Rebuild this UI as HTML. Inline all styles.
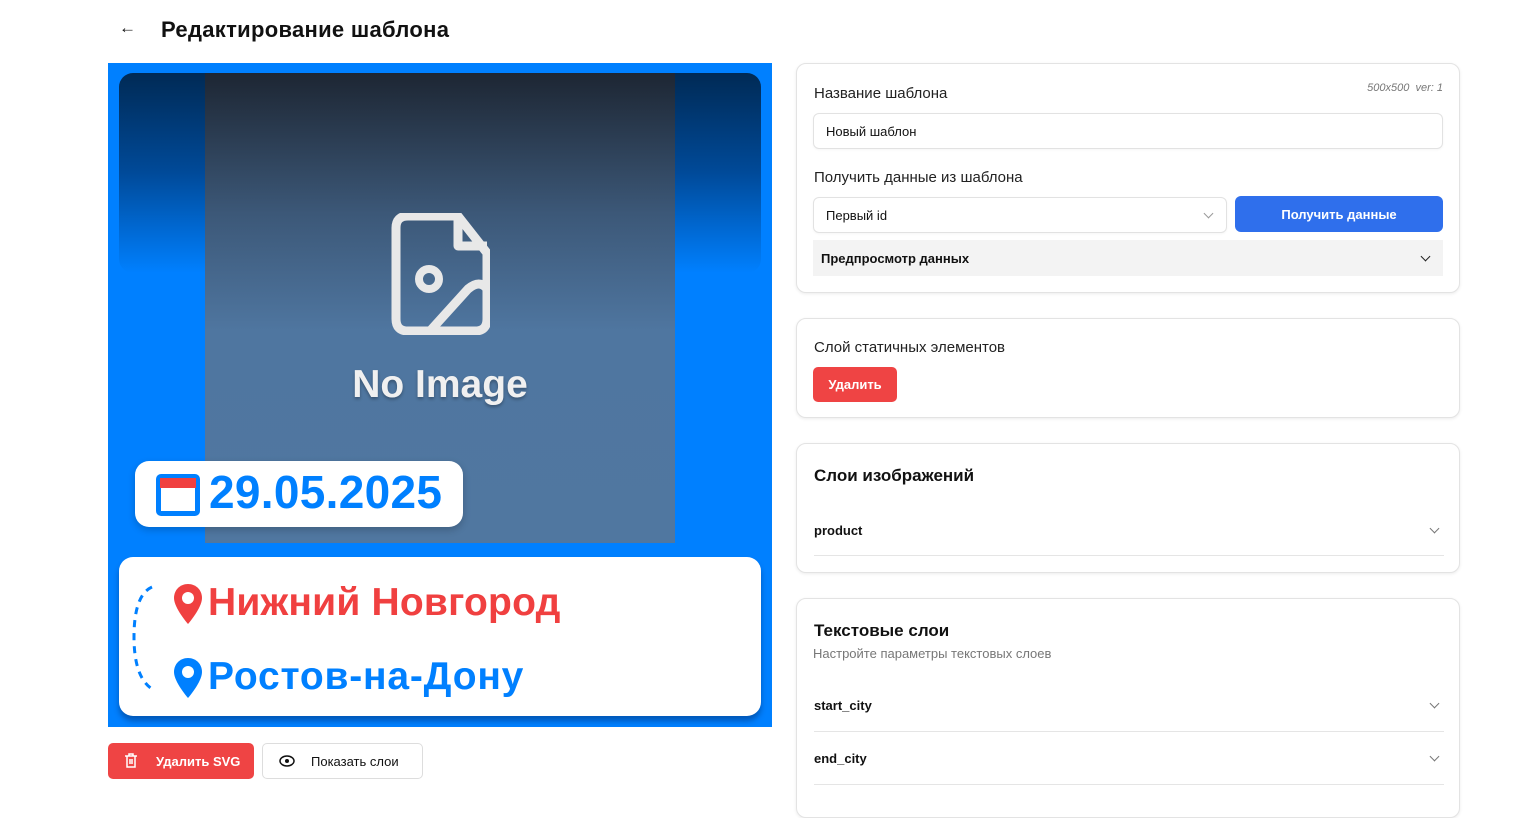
<!DOCTYPE html>
<html><head><meta charset="utf-8"><style>
*{box-sizing:border-box;margin:0;padding:0}
body{width:1522px;height:798px;overflow:hidden;background:#fff;font-family:"Liberation Sans","Noto Sans CJK SC",sans-serif;color:#111;position:relative}
.abs{position:absolute}
.card{position:absolute;left:796px;width:664px;border:1px solid #e3e3e3;border-radius:10px;box-shadow:0 1px 3px rgba(0,0,0,.08);background:#fff}
.lbl{position:absolute;left:17px;font-size:15px;color:#222}
.inp{position:absolute;border:1px solid #e2e2e2;border-radius:6px;font-size:13px;padding-left:12px;display:flex;align-items:center;box-shadow:0 1px 2px rgba(0,0,0,.04)}
.row{position:absolute;left:17px;width:630px;border-bottom:1px solid #e5e5e5;font-size:13px;font-weight:bold;display:flex;align-items:center;justify-content:space-between}
.chev{width:7px;height:7px;border-right:1.5px solid #555;border-bottom:1.5px solid #555;transform:rotate(45deg);margin-right:6px;margin-top:-4px}
</style></head><body>
<div class="abs" style="left:119px;top:18px;font-size:17px">&#8592;</div>
<div class="abs" style="left:161px;top:17px;font-size:22px;font-weight:bold;letter-spacing:0.3px">Редактирование шаблона</div>

<div class="abs" style="left:108px;top:63px;width:664px;height:664px;background:#0080ff;overflow:hidden">
 <div class="abs" style="left:11px;top:10px;width:642px;height:200px;border-radius:14px;background:linear-gradient(#002a55,#004a99 50%,#0080ff)"></div>
 <div class="abs" style="left:97px;top:10px;width:470px;height:470px;background:linear-gradient(#1d2633,#3c5878 30%,#4f76a0 55%,#5077a0)"></div>
 <svg class="abs" style="left:282px;top:150px" width="100" height="122" viewBox="0 0 100 122"><path d="M18 3H68L97 40V106Q97 118 85 118H18Q6 118 6 106V15Q6 3 18 3Z M68 3V33H97 M40 118L78 76Q90 66 97 76" fill="none" stroke="#e8e8e8" stroke-width="9" stroke-linejoin="round"/><circle cx="39" cy="66" r="10" fill="none" stroke="#e8e8e8" stroke-width="8"/></svg>
 <div class="abs" style="left:97px;width:470px;top:300px;text-align:center;color:#f0f0f0;font-size:39px;font-weight:bold;text-shadow:0 2px 3px rgba(0,0,0,.3)">No Image</div>
 <div class="abs" style="left:27px;top:398px;width:328px;height:66px;background:#fff;border-radius:14px;box-shadow:0 3px 8px rgba(0,0,0,.2)"></div>
 <div class="abs" style="left:48px;top:411px;width:44px;height:42px;border:5px solid #0080ff;border-radius:5px;background:#fff"><div style="height:10px;background:#f04040;margin:-1px"></div></div>
 <div class="abs" style="left:101px;top:402px;font-size:46px;font-weight:bold;color:#0080ff;letter-spacing:0.3px">29.05.2025</div>
 <div class="abs" style="left:11px;top:494px;width:642px;height:159px;background:#fff;border-radius:14px;box-shadow:0 5px 6px rgba(0,40,100,.45)"></div>
 <svg class="abs" style="left:20px;top:518px" width="40" height="112"><path d="M24 6Q6 14 6 56Q6 96 24 108" fill="none" stroke="#0080ff" stroke-width="3" stroke-dasharray="7 6"/></svg>
 <svg class="abs" style="left:65px;top:520px" width="30" height="42" viewBox="0 0 30 42"><path d="M15 1C7 1 1 7 1 15C1 25 15 41 15 41S29 25 29 15C29 7 23 1 15 1Z" fill="#f04040"/><circle cx="15" cy="15" r="6" fill="#fff"/></svg>
 <svg class="abs" style="left:65px;top:594px" width="30" height="42" viewBox="0 0 30 42"><path d="M15 1C7 1 1 7 1 15C1 25 15 41 15 41S29 25 29 15C29 7 23 1 15 1Z" fill="#0080ff"/><circle cx="15" cy="15" r="6" fill="#fff"/></svg>
 <div class="abs" style="left:100px;top:518px;font-size:39px;font-weight:bold;color:#f04040;letter-spacing:0.2px">Нижний Новгород</div>
 <div class="abs" style="left:100px;top:592px;font-size:39px;font-weight:bold;color:#0080ff;letter-spacing:0.8px">Ростов-на-Дону</div>
</div>

<div class="abs" style="left:108px;top:743px;width:146px;height:36px;background:#ef4444;border-radius:5px;color:#fff;font-size:13px;font-weight:bold;display:flex;align-items:center;padding-left:48px">Удалить SVG</div>
<svg class="abs" style="left:124px;top:753px" width="14" height="16"><path d="M1 3H13M5 3V1H9V3M3 3V14H11V3M6 6V11M8 6V11" fill="none" stroke="#fff" stroke-width="1.5"/></svg>
<div class="abs" style="left:262px;top:743px;width:161px;height:36px;border:1px solid #ddd;border-radius:5px;font-size:13px;display:flex;align-items:center;padding-left:48px">Показать слои</div>
<svg class="abs" style="left:279px;top:754px" width="16" height="14"><ellipse cx="8" cy="7" rx="7" ry="5" fill="none" stroke="#111" stroke-width="1.5"/><circle cx="8" cy="7" r="2" fill="#111"/></svg>

<div class="card" style="top:63px;height:230px">
 <div class="lbl" style="top:21px">Название шаблона</div>
 <div class="abs" style="right:16px;top:18px;font-size:11px;color:#777;font-style:italic">500x500 &nbsp;ver: 1</div>
 <div class="inp" style="left:16px;top:49px;width:630px;height:36px">Новый шаблон</div>
 <div class="lbl" style="top:105px">Получить данные из шаблона</div>
 <div class="inp" style="left:16px;top:133px;width:414px;height:36px;justify-content:space-between">Первый id<div class="chev" style="border-color:#999;margin-right:14px"></div></div>
 <div class="abs" style="left:438px;top:132px;width:208px;height:36px;background:#2f6fec;border-radius:6px;color:#fff;font-size:13px;font-weight:bold;display:flex;align-items:center;justify-content:center">Получить данные</div>
 <div class="abs" style="left:16px;top:176px;width:630px;height:36px;background:#f3f3f3;font-size:13px;font-weight:bold;display:flex;align-items:center;justify-content:space-between;padding-left:8px">Предпросмотр данных<div class="chev" style="border-color:#222;margin-right:14px"></div></div>
</div>

<div class="card" style="top:318px;height:100px">
 <div class="lbl" style="top:20px">Слой статичных элементов</div>
 <div class="abs" style="left:16px;top:48px;width:84px;height:35px;background:#ef4444;border-radius:5px;color:#fff;font-size:13px;font-weight:bold;display:flex;align-items:center;justify-content:center">Удалить</div>
</div>

<div class="card" style="top:443px;height:130px">
 <div class="lbl" style="top:22px;font-size:17px;font-weight:bold;color:#111">Слои изображений</div>
 <div class="row" style="top:61px;height:51px">product<div class="chev" style="border-color:#777"></div></div>
</div>

<div class="card" style="top:598px;height:220px">
 <div class="lbl" style="top:22px;font-size:17px;font-weight:bold;color:#111">Текстовые слои</div>
 <div class="abs" style="left:16px;top:47px;font-size:13px;color:#777">Настройте параметры текстовых слоев</div>
 <div class="row" style="top:80px;height:53px">start_city<div class="chev" style="border-color:#777"></div></div>
 <div class="row" style="top:133px;height:53px">end_city<div class="chev" style="border-color:#777"></div></div>
</div>
</body></html>
